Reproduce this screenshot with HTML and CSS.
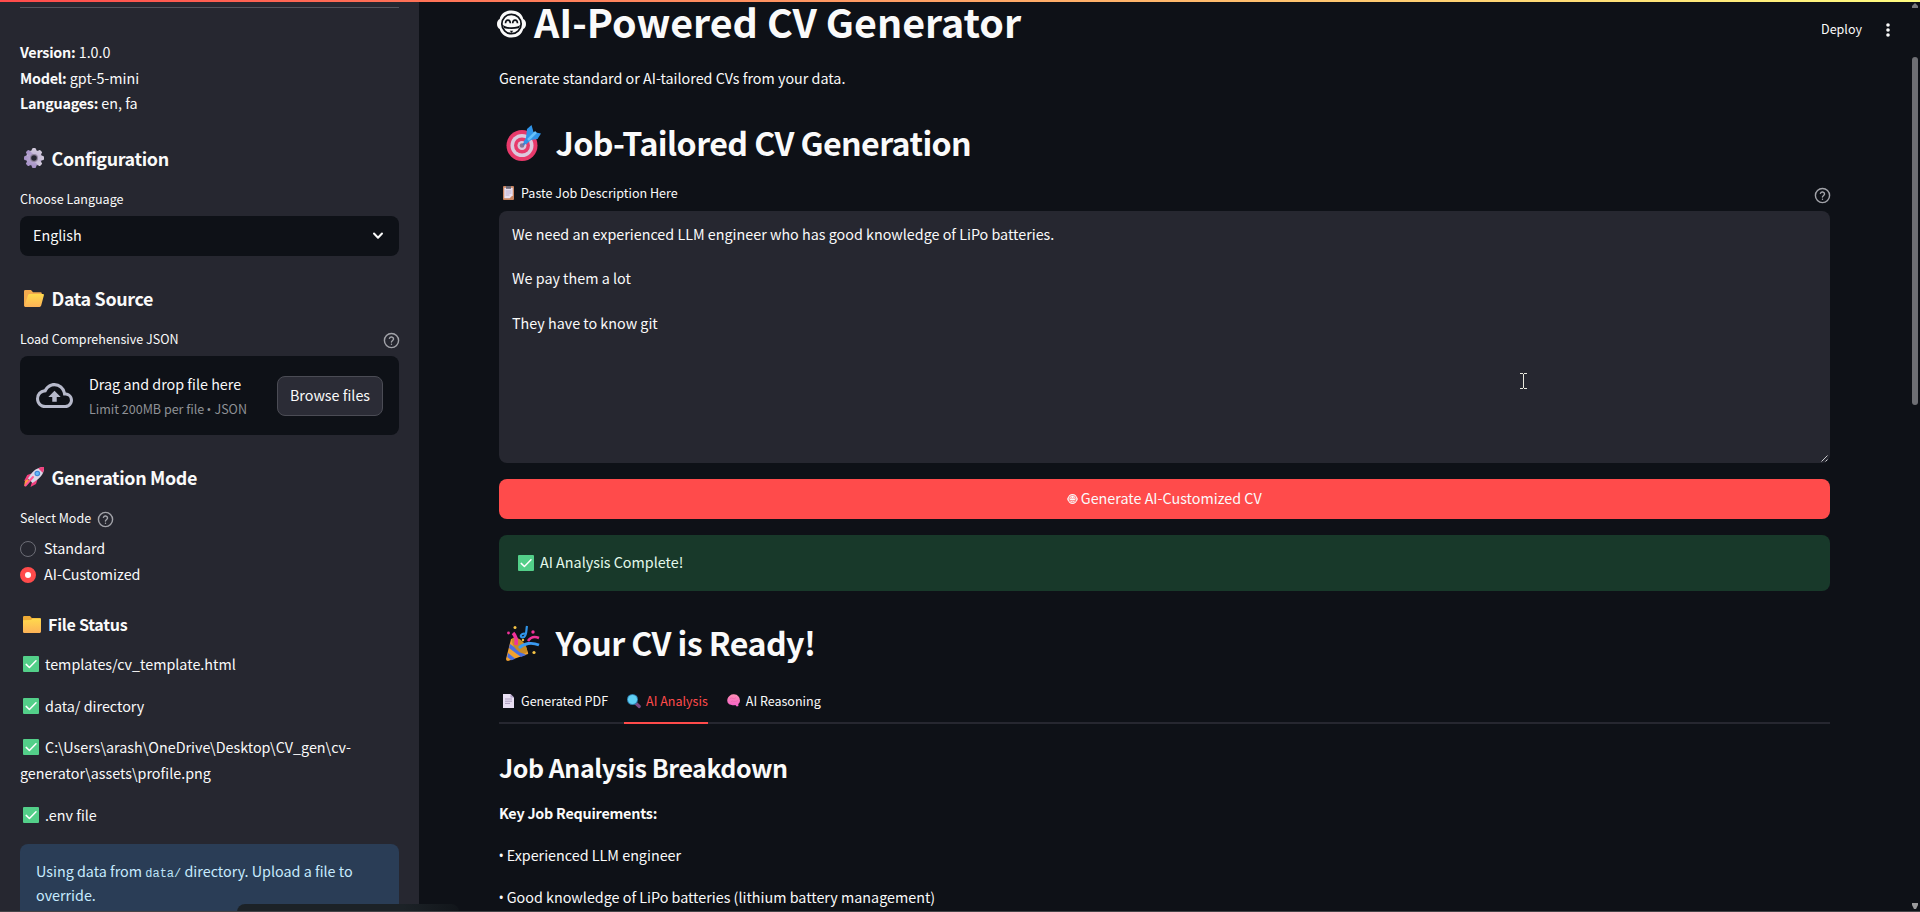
FILE: index.html
```html
<!DOCTYPE html>
<html lang="en">
<head>
<meta charset="utf-8">
<title>AI-Powered CV Generator</title>
<link rel="stylesheet" href="styles.css">
</head>
<body>
<svg class="defs" width="0" height="0" aria-hidden="true">
  <defs>
    <linearGradient id="gold" x1="0" y1="0" x2="0" y2="1"><stop offset="0" stop-color="#ffda4d"/><stop offset="1" stop-color="#fcb257"/></linearGradient>
    <linearGradient id="gearfill" x1="0" y1="0" x2="0" y2="1"><stop offset="0" stop-color="#d3cbdc"/><stop offset="1" stop-color="#a691c8"/></linearGradient>
    <linearGradient id="pink" x1="0" y1="0" x2="0" y2="1"><stop offset="0" stop-color="#ff8fb4"/><stop offset="1" stop-color="#f560c8"/></linearGradient>
    <symbol id="help" viewBox="0 0 24 24"><g fill="none" stroke="currentColor" stroke-width="2" stroke-linecap="round" stroke-linejoin="round"><circle cx="12" cy="12" r="10"/><path d="M9.090 9a3 3 0 0 1 5.830 1c0 2-3 2.600-3 4"/><path d="M12 17.300h.01"/></g></symbol>
    <symbol id="check" viewBox="0 0 16 16"><rect width="16" height="16" rx="1" fill="#53cf89"/><path d="M3.200 8.400 6.400 11.500 13 4.800" fill="none" stroke="#fff" stroke-width="1.500" stroke-linecap="round" stroke-linejoin="round"/></symbol>
    <symbol id="face" viewBox="0 0 30 28"><path d="M15 0C8 0 3.800 4 2.800 8.800 1 9.600 0 11.600 0 14s1 4.400 2.800 5.200C4.300 24.500 8.500 28 15 28s10.700-3.500 12.200-8.800C29 18.400 30 16.400 30 14s-1-4.400-2.800-5.200C26.200 4 22 0 15 0Z" fill="currentColor"/><circle cx="15" cy="14" r="10" fill="none" stroke="var(--face-ink)" stroke-width="1.800"/><path d="M8.800 13.300c.2-4.400 4.800-4.400 5 0M16.200 13.300c.2-4.400 4.800-4.400 5 0" fill="none" stroke="var(--face-ink)" stroke-width="1.700"/><path d="M5.500 14.500Q8 17.300 15 17.300t9.500-2.800L22.500 18.500Q15 19.800 7.500 18.500Z" fill="var(--face-ink)"/><path d="M13.200 21h3.600l-1.800 2.400z" fill="var(--face-ink)"/></symbol>
  </defs>
</svg>
<div class="rainbow"></div>
<div class="app">
  <aside class="sidebar">
    <hr class="rule">
    <p class="text meta"><b>Version:</b> 1.0.0<br><b>Model:</b> gpt-5-mini<br><b>Languages:</b> en, fa</p>

    <h3 class="side-title"><svg class="ic20" viewBox="0 0 20 20"><g fill="url(#gearfill)"><circle cx="10" cy="10" r="8"/><rect x="7.800" y="0" width="4.400" height="20" rx="1.500"/><rect x="7.800" y="0" width="4.400" height="20" rx="1.500" transform="rotate(45 10 10)"/><rect x="7.800" y="0" width="4.400" height="20" rx="1.500" transform="rotate(90 10 10)"/><rect x="7.800" y="0" width="4.400" height="20" rx="1.500" transform="rotate(135 10 10)"/></g><circle cx="10" cy="10" r="4" fill="#8f849b"/><circle cx="10" cy="10" r="2.800" fill="#262730"/></svg><span>Configuration</span></h3>
    <div class="label"><span>Choose Language</span></div>
    <div class="select"><span class="lift">English</span><svg width="12" height="8" viewBox="0 0 12 8"><path d="m2 1.500 4 4.200 4-4.200" fill="none" stroke="#fafafa" stroke-width="2" stroke-linecap="round" stroke-linejoin="round"/></svg></div>

    <h3 class="side-title"><svg class="ic20" viewBox="0 0 20 20"><path d="M0 3.300Q0 2 1.300 2H7l2 2.300h7.500q1.300 0 1.300 1.300V10L2 19Q0 18.500 0 17.500Z" fill="#f3ab4e"/><path d="M4 7.200Q4.400 6 5.600 6H19q1.200 0 .9 1.300l-2.700 10.300Q16.800 19 15.500 19H1.500Q0 18.500.6 17.300Z" fill="url(#gold)"/></svg><span>Data Source</span></h3>
    <div class="label spread"><span>Load Comprehensive JSON</span><svg class="help"><use href="#help"/></svg></div>
    <div class="uploader">
      <svg class="cloud" width="37" height="25" viewBox="0 4 24 16" preserveAspectRatio="none"><path d="M19.350 10.040A7.490 7.490 0 0 0 12 4C9.110 4 6.600 5.640 5.350 8.040A5.994 5.994 0 0 0 0 14c0 3.310 2.690 6 6 6h13c2.760 0 5-2.240 5-5 0-2.640-2.050-4.780-4.650-4.960zM19 18H6c-2.210 0-4-1.790-4-4 0-2.050 1.530-3.760 3.560-3.970l1.070-.11.500-.95A5.469 5.469 0 0 1 12 6c2.620 0 4.880 1.860 5.390 4.430l.3 1.500 1.530.11A2.980 2.980 0 0 1 22 15c0 1.650-1.350 3-3 3zM8 13h2.550v3h2.900v-3H16l-4-4z" fill="#b6b9ca"/></svg>
      <div class="drop"><div class="text drop-main">Drag and drop file here</div><div class="drop-hint">Limit 200MB per file <i class="bull">•</i> JSON</div></div>
      <button class="browse">Browse files</button>
    </div>

    <h3 class="side-title"><svg class="ic20" viewBox="0 0 20 20"><path d="m5 14-5 5.500 1-6 3-2.500z" fill="#ff9b3c"/><path d="M7.500 6.500 3.200 8 0 14l5-2zM13.500 12.500 12 17l-5.500 3L8 15z" fill="#f0407d"/><path d="M20 0c.3 5-2 9-7 13l-4.500 3L4 11.500 7 7C11 2 15 0 20 0Z" fill="#dbd6e6"/><path d="M20 0c-2 0-4 .4-5.800 1.300l4.500 4.500C19.700 4 20.100 2 20 0Z" fill="#f0407d"/><circle cx="13.300" cy="6.500" r="2.800" fill="#3d84d8"/><circle cx="13.300" cy="6.500" r="1.700" fill="#62b8f5"/><path d="m9 10-7.500 8.500" stroke="#ff5795" stroke-width="2" stroke-linecap="round"/></svg><span>Generation Mode</span></h3>
    <div class="label"><span>Select Mode</span><svg class="help"><use href="#help"/></svg></div>
    <div class="radios">
      <div class="radio"><i class="dot"></i><span class="lift">Standard</span></div>
      <div class="radio"><i class="dot on"></i><span class="lift">AI-Customized</span></div>
    </div>

    <h4 class="files-title"><svg width="18" height="17" viewBox="0 0 18 17"><path d="M0 1.200Q0 0 1.200 0H7l1.800 2H17q1 0 1 1.200V8H0Z" fill="#edaa35"/><path d="M0 4.200 8 4l1.500-1.600H17q1 0 1 1.200v12q0 1.400-1.200 1.400H1.200Q0 17 0 15.800Z" fill="url(#gold)"/></svg><span>File Status</span></h4>
    <div class="files">
      <p class="text"><svg class="check"><use href="#check"/></svg>templates/cv_template.html</p>
      <p class="text"><svg class="check"><use href="#check"/></svg>data/ directory</p>
      <p class="text"><svg class="check"><use href="#check"/></svg>C:\Users\arash\OneDrive\Desktop\CV_gen\cv-<br>generator\assets\profile.png</p>
      <p class="text"><svg class="check"><use href="#check"/></svg>.env file</p>
      <div class="info">Using data from <code>data/</code> directory. Upload a file to override.</div>
    </div>
  </aside>

  <main class="main">
    <h1 class="title"><svg class="face" width="29" height="28"><use href="#face"/></svg><span>AI-Powered CV Generator</span></h1>
    <p class="text sub">Generate standard or AI-tailored CVs from your data.</p>
    <h2 class="head tailored"><svg width="36" height="36" viewBox="0 0 36 36"><circle cx="16" cy="20.500" r="15.500" fill="#e83a6b"/><circle cx="16" cy="20.500" r="11.500" fill="#dcc9de"/><circle cx="16" cy="20.500" r="8" fill="#e83a6b"/><circle cx="16" cy="20.500" r="4.500" fill="#d9c6db"/><circle cx="16" cy="20.500" r="2.300" fill="#8a7594"/><path d="m17 20 9-10" stroke="#4a79c9" stroke-width="2"/><path d="M20 12.500 21 4l4.500-4 2 7 7.500 1.500-3.500 5.500-6.500 1-5 4.500-2.500-2.500z" fill="#2f94e8"/><path d="m22 15 8-8" stroke="#66c2fa" stroke-width="2.500"/></svg><span>Job-Tailored CV Generation</span></h2>
    <div class="label spread paste"><span class="with-icon"><svg width="11" height="14" viewBox="0 0 11 14"><rect width="11" height="14" rx="1" fill="#c98460"/><path d="M1.300 1.800h8.400v7.500l-3 3H1.300z" fill="#eae2f3"/><path d="M3 0h5v2.800H3z" fill="#6c6874"/><path d="M2.500 5h6M2.500 7h6M2.500 9h4" stroke="#b3a3c4" stroke-width=".8"/></svg>Paste Job Description Here</span><svg class="help"><use href="#help"/></svg></div>
    <div class="area">We need an experienced LLM engineer who has good knowledge of LiPo batteries.

We pay them a lot

They have to know git<svg class="grip" width="8" height="8" viewBox="0 0 8 8"><path d="m.5 7.500 6-6M4.500 7.500l2-2" stroke="#c8c8cc" stroke-width="1"/></svg><svg class="caret" width="7" height="16" viewBox="0 0 7 16"><path d="M0 .5h3m1 0h3M0 15.500h3m1 0h3M3.500 1v14" stroke="#e8e8dc" stroke-width="1"/></svg></div>
    <button class="generate"><svg class="face" width="11" height="10" viewBox="0 0 30 28"><use href="#face"/></svg><span class="lift">Generate AI-Customized CV</span></button>
    <div class="success"><svg width="16" height="16"><use href="#check"/></svg><span class="lift">AI Analysis Complete!</span></div>
    <h2 class="head ready"><svg width="36" height="36" viewBox="0 0 36 36"><path d="M5 13q6-3 12 5t5 10L2 35Q0 35 0 33Z" fill="#f3a12f"/><path d="M4 18 3 22l12 9 5-2zM2 27l-.7 4 4 3.300 4-1.500z" fill="#4a6fe0"/><ellipse cx="13.500" cy="19.500" rx="5" ry="10" transform="rotate(-43 13.500 19.500)" fill="#c98a26"/><path d="M13 22c5-5 13-6 20-3" stroke="#3a9bf2" stroke-width="2.800" fill="none"/><path d="M10 19c1-6 0-9-3-12" stroke="#f0329a" stroke-width="3.600" fill="none"/><path d="M22 15q4-6 11-3" stroke="#f0329a" stroke-width="2.600" fill="none"/><path d="M21 0c-1 4 0 9-3 11-5 2-4-5 2-3" stroke="#2f94e8" stroke-width="2.200" fill="none"/><g fill="#f5c445"><circle cx="9" cy="1.500" r="1.500"/><circle cx="28" cy="26.500" r="1.600"/><circle cx="17" cy="14" r="1.200"/></g><circle cx="27" cy="6" r="1.700" fill="#f0329a"/><circle cx="2.500" cy="7" r="1.400" fill="#f0329a"/></svg><span>Your CV is Ready!</span></h2>
    <nav class="tabs">
      <div class="tab"><svg width="11" height="14" viewBox="0 0 11 14"><path d="M0 0h7.500L11 3.500V14H0z" fill="#e9e0f4"/><path d="M7.500 0v3.500H11z" fill="#b09fc6"/><path d="M2 5h7M2 7.200h7M2 9.400h5" stroke="#a596b8" stroke-width=".9"/></svg><span>Generated PDF</span></div>
      <div class="tab active"><svg width="14" height="14" viewBox="0 0 14 14"><path d="m8.500 9 3.800 3.500" stroke="#7b4a82" stroke-width="3.200" stroke-linecap="round"/><circle cx="5.500" cy="5.500" r="5.500" fill="#2f7fae"/><circle cx="5.500" cy="5.500" r="4.600" fill="#5fd0f5"/></svg><span>AI Analysis</span></div>
      <div class="tab"><svg width="13" height="13" viewBox="0 0 13 13"><path d="M3 1.500Q4.500 0 7 .2q3 0 4.300 2Q13.200 4 13 6.800q-.2 2.200-1.700 3.200L11.400 12 9.800 12.400 8.300 11q-2 .6-3.600 0Q1.500 11 .6 8.600-.8 4.300 3 1.500Z" fill="url(#pink)"/><path d="M3 4.500q2-1 3 0t3-1M4 7.500q2-1 3 0 2 0 4-1" stroke="#e863a9" stroke-width=".6" fill="none"/></svg><span>AI Reasoning</span></div>
    </nav>
    <h3 class="breakdown">Job Analysis Breakdown</h3>
    <p class="text key"><b>Key Job Requirements:</b></p>
    <p class="text bullet"><i class="bull">•</i> Experienced LLM engineer</p>
    <p class="text bullet"><i class="bull">•</i> Good knowledge of LiPo batteries (lithium battery management)</p>
  </main>

  <div class="toolbar"><span>Deploy</span><svg width="4" height="14" viewBox="0 0 4 14"><g fill="#fafafa"><circle cx="2" cy="2" r="1.800"/><circle cx="2" cy="7" r="1.800"/><circle cx="2" cy="12" r="1.800"/></g></svg></div>
  <div class="scroll"><svg width="6" height="5" viewBox="0 0 6 5"><path d="M3 0 6 3v2H0V3z" fill="#77787c"/></svg><i class="thumb"></i><svg width="6" height="6" viewBox="0 0 6 6"><path d="M0 0h6v2L4 6H2L0 2z" fill="#9a9a9c"/></svg></div>
</div>
<div class="status"></div>
<div class="edge"></div>
</body>
</html>
```
FILE: styles.css
```css
* { box-sizing: border-box; margin: 0; padding: 0; }

html, body { height: 912px; overflow: hidden; }

body {
  background: #0e1117;
  color: #fafafa;
  font-family: "Noto Sans CJK SC", "Noto Sans", sans-serif;
  font-size: 14.33px;
  line-height: 25.6px;
  position: relative;
}

svg { display: block; flex: none; overflow: visible; }
.defs { position: absolute; }
button { font: inherit; color: inherit; border: 0; }
b { font-weight: 600; letter-spacing: -.016em; }
span, p, div, h1, h2, h3, h4, button { white-space: nowrap; }
.lift { padding-bottom: 2px; }
.bull {
  display: inline-block; width: 4.5px; font-style: normal; line-height: 1;
  font-family: "Open Sans", sans-serif; text-indent: -.6px;
}

.rainbow {
  position: absolute; z-index: 3; top: 0; left: 0; width: 100%; height: 2px;
  background: linear-gradient(90deg, #ff4b4b, #fffd80);
}

.app { display: flex; height: 912px; position: relative; }

/* Sidebar */
.sidebar {
  width: 419px; height: 912px; flex: none; overflow: hidden;
  background: #262730; padding: 7px 20px 0;
  display: flex; flex-direction: column;
}
.sidebar > * { flex: none; }
.rule { border: 0; height: 1px; background: #53545c; }
.meta { margin-top: 31px; height: 77px; }

.side-title {
  margin: 30px 0 0 4px; height: 24px; line-height: 24px;
  font-size: 17.9px; font-weight: 600; letter-spacing: -.019em;
  display: flex; align-items: center; gap: 7.5px;
}
.ic20 { width: 20px; height: 20px; }

.label {
  margin-top: 18px; height: 21px; line-height: 21px; font-size: 12.54px;
  display: flex; align-items: center; gap: 5.5px;
}
.spread { justify-content: space-between; }
.help { width: 17px; height: 17px; color: #a2a3a9; margin: 3px -.5px 0 0; }

.select {
  margin-top: 7px; height: 40px; border-radius: 8px; background: #0e1117;
  display: flex; align-items: center; justify-content: space-between; padding: 0 15px 0 13px;
}

.uploader {
  margin-top: 7px; height: 79px; border-radius: 8px; background: #0e1117;
  display: flex; align-items: center; padding: 0 16px;
}
.drop { margin-left: 16px; flex: 1; }
.drop-main { line-height: 26px; }
.drop-hint { font-size: 12.54px; line-height: 24px; color: #8f9196; }
.browse {
  width: 106px; height: 40px; border-radius: 8px; background: #2b2c36;
  border: 1px solid #4b4c55; line-height: 36px; padding-bottom: 2px;
}

.radios { margin-top: 8px; }
.radio { height: 26px; line-height: 24px; display: flex; align-items: center; gap: 8px; }
.dot { width: 16px; height: 16px; border-radius: 50%; border: 1px solid #6c6d76; }
.dot.on { border: 5px solid #ff4b4b; background: #fff; }

.files-title {
  margin: 24px 0 0 3px; height: 24px; line-height: 24px; font-size: 16.1px; font-weight: 600;
  letter-spacing: -.018em;
  display: flex; align-items: center; gap: 7px;
}
.files { margin-top: 15.3px; display: flex; flex-direction: column; gap: 16px; }
.check { display: inline-block; width: 16px; height: 16px; margin: 0 6px 0 3px; vertical-align: -2px; }
.info {
  margin-top: .8px; height: 100px; border-radius: 8px; background: #2a3d56; color: #c7ebff;
  padding: 15px 16px; line-height: 24px; white-space: normal;
}
.info code { font-family: "Liberation Mono", monospace; font-size: 12px; line-height: 1; color: #bfe4f8; }

/* Main column */
.main { width: 1331px; margin-left: 80px; display: flex; flex-direction: column; flex: none; }
.main > * { flex: none; }
.title {
  margin: 1px 0 0 -2px; height: 40px; line-height: 40px; font-size: 39.4px; font-weight: 700;
  display: flex; gap: 8px;
}
.title .face { margin-top: 9px; }
.face { --face-ink: #0e1117; }
.sub { margin-top: 24px; height: 26px; }
.head {
  height: 43px; line-height: 43px; font-size: 32.2px; font-weight: 600; letter-spacing: -.0185em;
  display: flex; gap: 13.5px; padding-left: 7px;
}
.head svg { margin-top: 4px; }
.tailored { margin-top: 30px; }
.paste { margin-top: 18px; padding-left: 4px; }
.paste .help { margin-top: 5px; }
.with-icon { display: flex; align-items: center; gap: 7px; }
.area {
  position: relative; margin-top: 8px; height: 252px; border-radius: 8px; background: #262730;
  padding: 11.6px 13px; line-height: 22.4px; white-space: pre;
}
.grip { position: absolute; right: 1px; bottom: 1px; }
.caret { position: absolute; left: 1021px; top: 162px; }
.generate {
  margin-top: 16px; height: 40px; border-radius: 8px; background: #ff4b4b;
  display: flex; align-items: center; justify-content: center; gap: 2.5px; line-height: 36px;
}
.generate .face { --face-ink: #ff4b4b; }
.success {
  margin-top: 16px; height: 56px; border-radius: 8px; background: #18392a; color: #e4faec;
  display: flex; align-items: center; gap: 6px; padding-left: 19px;
}
.ready { margin-top: 30px; }
.ready svg { margin-top: 5px; }
.tabs {
  margin-top: 20px; height: 40px; border-bottom: 2px solid #262730;
  display: flex; gap: 16px; font-size: 12.54px; line-height: 21px;
}
.tab { height: 40px; padding: 6px 0 0 3px; display: flex; gap: 5px; border-bottom: 2px solid transparent; }
.tab:first-child { padding-left: 4px; gap: 7px; }
.tab svg { margin-top: 4px; }
.tab.active { color: #ff4b4b; border-color: #ff4b4b; }
.tab:last-child { gap: 6px; }
.breakdown {
  margin-top: 26px; height: 34px; line-height: 34px; font-size: 25px; font-weight: 600;
  letter-spacing: -.0185em;
}
.key { margin-top: 16px; }
.bullet { margin-top: 16.3px; }

/* Window furniture laid over the page */
.toolbar {
  position: absolute; top: 19px; right: 30px; height: 20px;
  display: flex; align-items: center; gap: 24px; font-size: 12.54px; line-height: 20px;
}
.toolbar svg { margin-top: 2px; }
.scroll {
  position: absolute; top: 3px; right: 2px; width: 6px; height: 906px;
  display: flex; flex-direction: column; align-items: center;
}
.thumb { width: 6px; height: 348px; margin: 49px 0 auto; border-radius: 3px; background: #6e6f74; }
.status {
  position: absolute; left: 237px; top: 904px; width: 222px; height: 8px;
  border-radius: 8px 8px 0 0; background: linear-gradient(90deg, #1c2227 75%, #11151a);
}
.edge { position: absolute; left: 0; top: 911px; width: 100%; height: 1px; background: #454448; }
```
